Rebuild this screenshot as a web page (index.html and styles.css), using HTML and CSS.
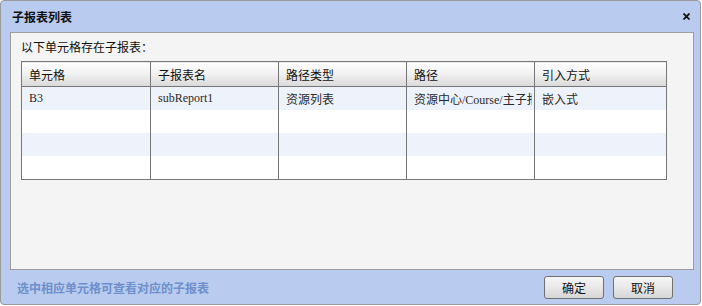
FILE: index.html
```html
<!DOCTYPE html>
<html>
  <head>
    <meta charset="utf-8">
    <title>子报表列表</title>
    <link rel="stylesheet" href="styles.css">
  </head>
  <body>
    <div class="dialog">
      <div class="titlebar">
        <span class="title">子报表列表</span>
        <svg class="close" width="7" height="7" viewBox="0 0 7 7">
          <path d="M0.5 0.5 L6.5 6.5 M6.5 0.5 L0.5 6.5" stroke="#111" stroke-width="1.8"/>
        </svg>
      </div>

      <div class="panel">
        <p class="hint">以下单元格存在子报表：</p>
        <table class="grid">
          <colgroup>
            <col class="c1"><col class="c2"><col class="c3"><col class="c4"><col class="c5">
          </colgroup>
          <thead>
            <tr>
              <th>单元格</th>
              <th>子报表名</th>
              <th>路径类型</th>
              <th>路径</th>
              <th>引入方式</th>
            </tr>
          </thead>
          <tbody>
            <tr>
              <td>B3</td>
              <td>subReport1</td>
              <td>资源列表</td>
              <td><div class="clip">资源中心/Course/主子报表.cpt</div></td>
              <td>嵌入式</td>
            </tr>
            <tr><td></td><td></td><td></td><td></td><td></td></tr>
            <tr><td></td><td></td><td></td><td></td><td></td></tr>
            <tr><td></td><td></td><td></td><td></td><td></td></tr>
          </tbody>
        </table>
      </div>

      <div class="footer">
        <span class="tip">选中相应单元格可查看对应的子报表</span>
        <div class="buttons">
          <button>确定</button>
          <button>取消</button>
        </div>
      </div>
    </div>
  </body>
</html>
```

FILE: styles.css
```css
body {
  margin: 0;
  font-family: "Noto Sans CJK SC", "Liberation Sans", sans-serif;
  font-size: 12px;
  background-color: #ffffff;
}

.dialog {
  width: 699px;
  height: 303px;
  border: 1px solid #9a9a9a;
  border-radius: 4px;
  background-color: #b9cbee;
  display: flex;
  flex-direction: column;
}

.titlebar {
  height: 31px;
  display: flex;
  align-items: center;
  justify-content: space-between;
  padding: 0 10px 0 11px;
}

.title {
  font-weight: bold;
  font-size: 12px;
  color: #111;
}

.close {
  display: block;
}

.panel {
  height: 236px;
  margin: 0 6px 0 9px;
  border: 1px solid #9c9c9c;
  background-color: #f4f4f4;
  padding: 0 10px;
}

.hint {
  margin: 0 0 6px 0;
  padding-top: 6px;
  line-height: 16px;
  color: #111;
}

.grid {
  border-collapse: collapse;
  table-layout: fixed;
  width: 646px;
  border: 1px solid #767676;
}

.grid .c1 { width: 129px; }
.grid .c2 { width: 128px; }
.grid .c3 { width: 128px; }
.grid .c4 { width: 128px; }
.grid .c5 { width: 132px; }

.grid th {
  height: 24px;
  padding: 0 0 0 7px;
  text-align: left;
  font-weight: normal;
  color: #111;
  border: 1px solid #767676;
  background: linear-gradient(#ffffff, #f0f0f0 50%, #d9d9d9);
}

.grid td {
  height: 23px;
  padding: 0 0 0 7px;
  border-left: 1px solid #767676;
  border-right: 1px solid #767676;
  font-family: "Liberation Serif", "Noto Sans CJK SC", serif;
  font-size: 12px;
  color: #2a2a2a;
  white-space: nowrap;
  overflow: hidden;
}

.grid .clip {
  width: 118px;
  overflow: hidden;
  white-space: nowrap;
}

.grid tbody tr:nth-child(odd) {
  background-color: #eef3fb;
}

.grid tbody tr:nth-child(even) {
  background-color: #ffffff;
}

.footer {
  flex: 1;
  display: flex;
  align-items: center;
  justify-content: space-between;
  padding: 0 27px 0 16px;
}

.tip {
  font-weight: bold;
  color: #6e8fcb;
}

.buttons {
  display: flex;
  gap: 9px;
}

.buttons button {
  width: 60px;
  height: 23px;
  padding: 0;
  font-family: "Noto Sans CJK SC", sans-serif;
  font-size: 12px;
  color: #111;
  border: 1px solid #707070;
  border-radius: 3px;
  background: linear-gradient(#f6f6f6, #e8e8e8 50%, #d6d6d6);
  cursor: pointer;
}
```
